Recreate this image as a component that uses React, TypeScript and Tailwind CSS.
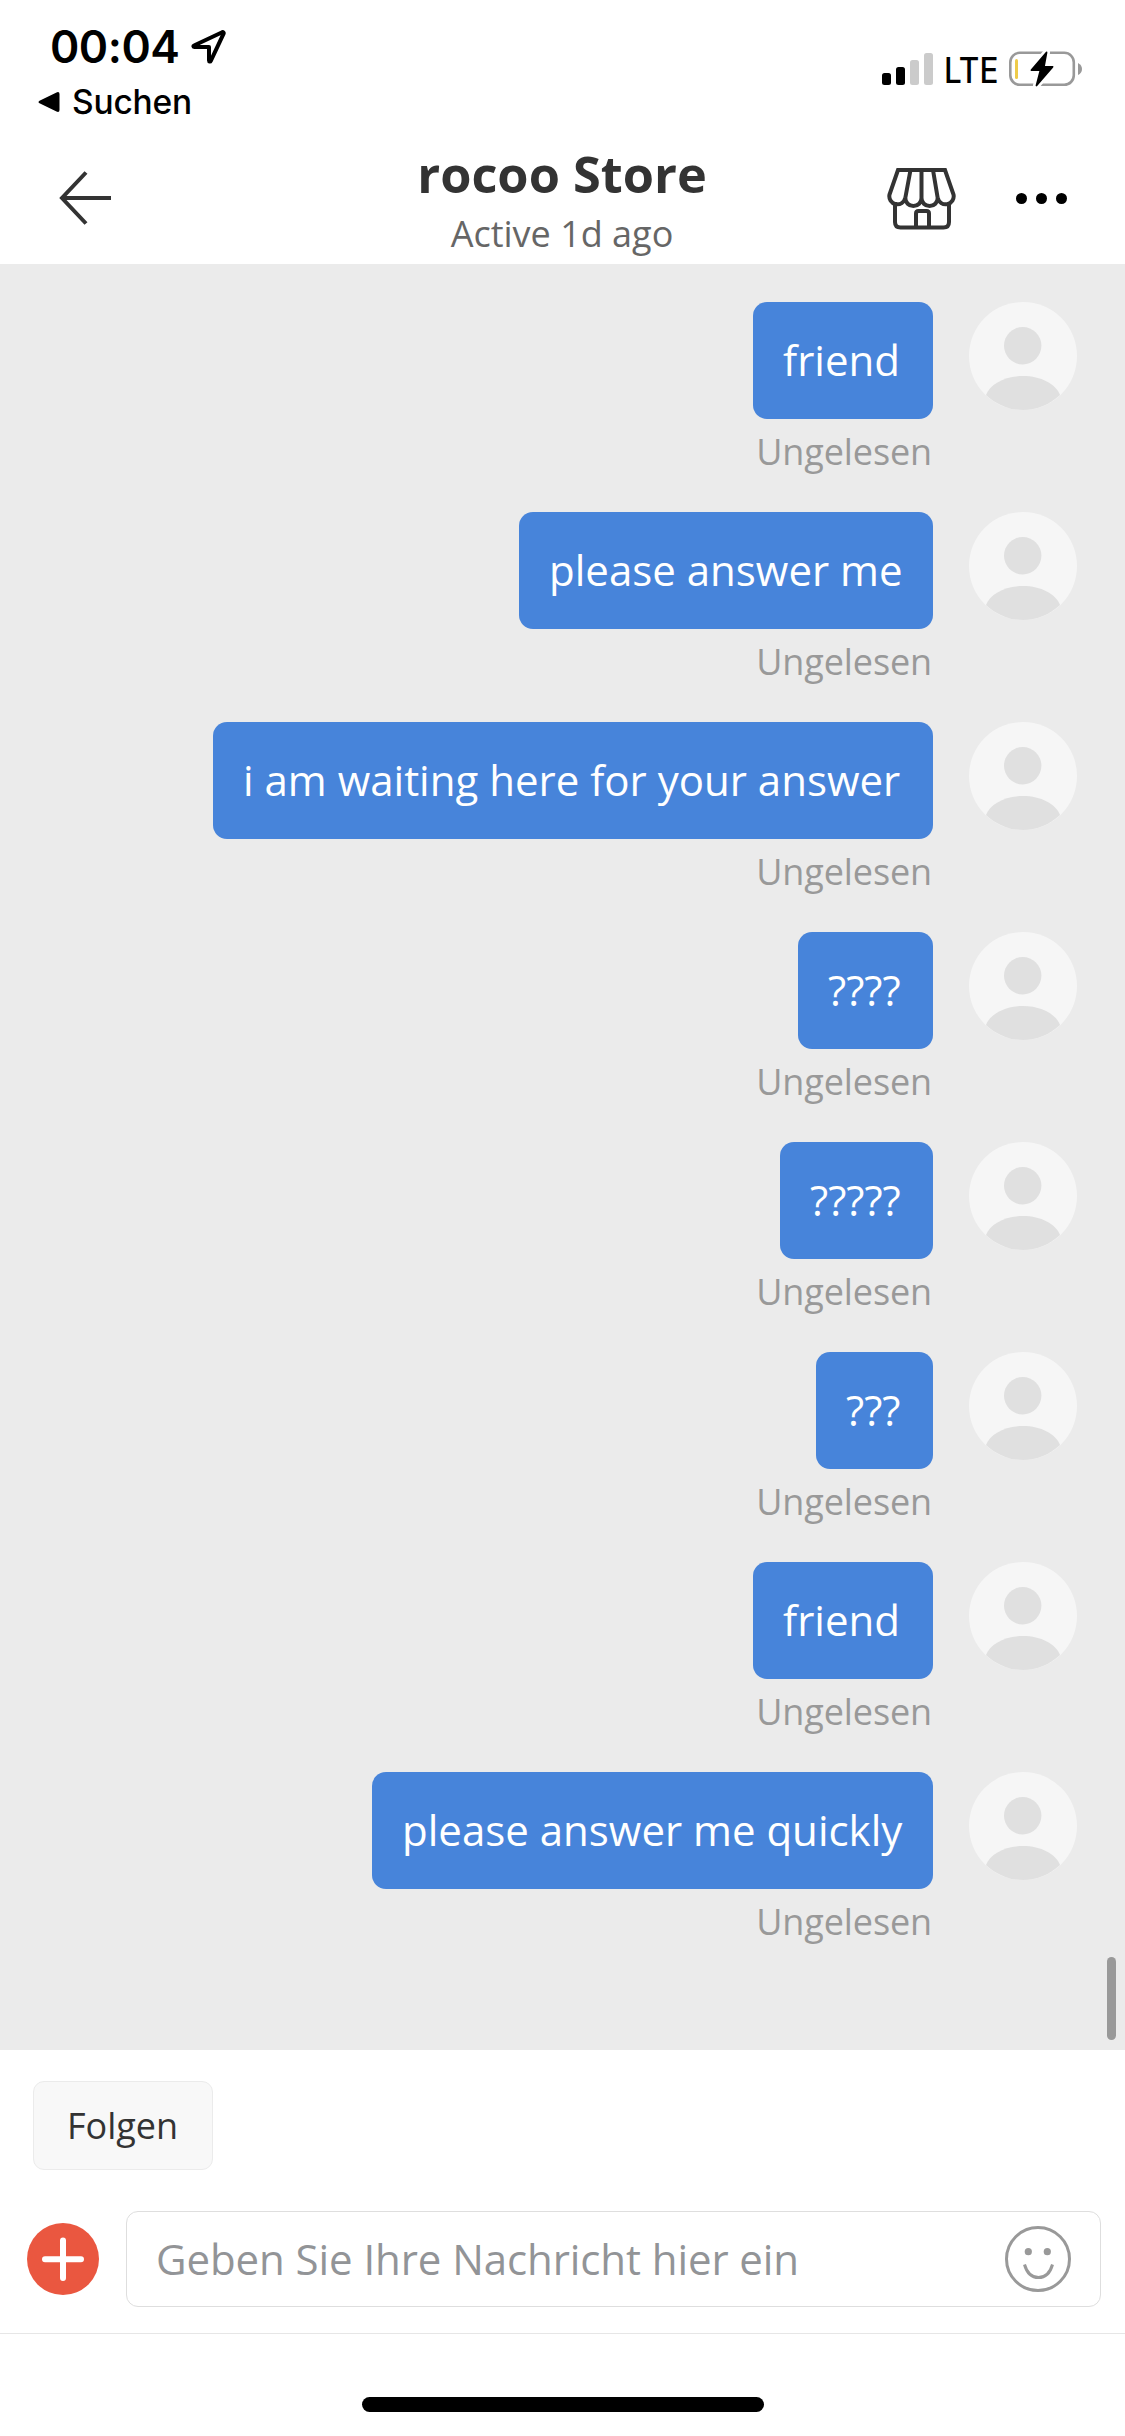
interface Message {
  id: number;
  text: string;
  size: string;
}

const messages: Message[] = [
  { id: 1, text: 'friend', size: 'w-[180px]' },
  { id: 2, text: 'please answer me', size: 'w-[414px]' },
  { id: 3, text: 'i am waiting here for your answer', size: 'w-[720px]' },
  { id: 4, text: '????', size: 'w-[135px]' },
  { id: 5, text: '?????', size: 'w-[153px]' },
  { id: 6, text: '???', size: 'w-[117px]' },
  { id: 7, text: 'friend', size: 'w-[180px]' },
  { id: 8, text: 'please answer me quickly', size: 'w-[561px]' },
];

function StatusBar() {
  return (
    <div className="flex h-[132px] justify-between font-['Inter',sans-serif] text-black">
      <div className="pl-[38px] pt-[20px]">
        <div className="flex items-center pl-[12px]">
          <span className="text-[44.500px] font-semibold leading-[54px] tracking-[-0.500px]">00:04</span>
          <svg className="ml-[12px]" width="36" height="36" viewBox="0 0 36 36" fill="none">
            <path
              d="M3 16.500 31.200 3.200c.9-.4 1.800.5 1.400 1.400L19.800 31.800c-.5 1.100-1.800.9-1.800-.3V18H3.500c-1.200 0-1.400-1.100-.5-1.500Z"
              stroke="black"
              strokeWidth="4"
              strokeLinejoin="round"
            />
          </svg>
        </div>
        <div className="mt-[8px] flex items-center">
          <svg width="22" height="22" viewBox="0 0 22 22">
            <path d="M1.500 9.700 18.500 1.400Q21.500.3 21.500 3v16q0 2.700-3 1.600L1.500 12.300q-2-1.300 0-2.600Z" />
          </svg>
          <span className="ml-[12px] text-[33.500px] font-medium leading-[40px] tracking-[-0.200px]">Suchen</span>
        </div>
      </div>

      <div className="mt-[51px] flex h-[36px] items-center pr-[42px]">
        <svg width="51" height="32" viewBox="0 0 51 32">
          <rect x="0" y="20" width="9" height="12" rx="2.500" />
          <rect x="14" y="14" width="9" height="18" rx="2.500" />
          <rect x="28" y="7" width="9" height="25" rx="2.500" fill="#cbcbcb" />
          <rect x="42" y="0" width="9" height="32" rx="2.500" fill="#cbcbcb" />
        </svg>
        <span className="ml-[11px] mt-[2px] w-[55px] origin-left scale-x-90 whitespace-nowrap text-[35px] font-medium leading-[36px]">
          LTE
        </span>
        <svg className="ml-[10px]" width="74" height="36" viewBox="0 0 74 36">
          <rect x="1.300" y="1.800" width="63.500" height="32" rx="9.500" fill="none" stroke="#999" strokeWidth="2.600" />
          <rect x="6" y="8" width="3" height="20" rx="1.500" fill="#eecb4a" />
          <path d="M69 12q4 2 4 6t-4 6Z" fill="#999" />
          <path
            d="M37.500 1.500 22.500 19.200h9L27.500 34.500 43.500 15.800h-8.600Z"
            stroke="white"
            strokeWidth="7"
            strokeLinejoin="round"
          />
          <path
            d="M37.500 1.500 22.500 19.200h9L27.500 34.500 43.500 15.800h-8.600Z"
            stroke="black"
            strokeWidth="1.800"
            strokeLinejoin="round"
          />
        </svg>
      </div>
    </div>
  );
}

function StoreIcon() {
  return (
    <svg width="69" height="62" viewBox="0 0 69 62" fill="none" stroke="#333" strokeWidth="4">
      <path d="M11 2h47l8.500 24.500a8 8 0 0 1-15.800 3.500 8 8 0 0 1-16.200 0 8 8 0 0 1-16.200 0A8 8 0 0 1 2.500 26.500L11 2Z" />
      <path d="M23.500 2 18.300 30M34.500 2v28M46 2l4.700 28" />
      <path d="M8 34v20q0 5.500 5.500 5.500h43Q62 59.500 62 54V34" />
      <path d="M29 59V45.500q0-2.500 2.500-2.500h8q2.500 0 2.500 2.500V59" />
    </svg>
  );
}

function Header() {
  return (
    <header className="flex h-[132px] items-center pl-[59px] pr-[58px]">
      <svg width="52" height="56" viewBox="0 0 52 56" fill="none" stroke="#333" strokeWidth="4">
        <path d="M52 28H3.500M27 2.500 3 28l24 25.500" />
      </svg>
      <div className="ml-[241px] mt-[6px] w-[420px] text-center">
        <h1 className="text-[50.500px] font-bold leading-[62px] text-[#333]">rocoo Store</h1>
        <p className="mt-[4px] text-[36px] leading-[50px] text-[#666]">Active 1d ago</p>
      </div>
      <div className="ml-auto mt-[1px] flex items-center">
        <StoreIcon />
        <div className="ml-[60px] flex gap-[9px]">
          <span className="size-[11px] rounded-full bg-black" />
          <span className="size-[11px] rounded-full bg-black" />
          <span className="size-[11px] rounded-full bg-black" />
        </div>
      </div>
    </header>
  );
}

function Avatar() {
  return (
    <svg width="108" height="108" viewBox="0 0 108 108">
      <circle cx="54" cy="54" r="54" fill="#f6f6f6" />
      <circle cx="53.700" cy="43.700" r="18.700" fill="#e0e0e0" />
      <path d="M17 93C21 82 36 74 54 74s33 8 37 19C81 102.500 68 108 54 108s-27-5.500-37-15Z" fill="#e0e0e0" />
    </svg>
  );
}

function MessageRow({ message }: { message: Message }) {
  return (
    <div className="flex h-[210px] items-start justify-end gap-[36px]">
      <div className="flex flex-col items-end">
        <div
          className={`flex h-[117px] items-center whitespace-nowrap rounded-[14px] bg-[#4784da] pb-[3px] pl-[30px] text-[42px] leading-[57px] text-white ${message.size}`}
        >
          {message.text}
        </div>
        <span className="mr-[1px] mt-[8px] text-[36px] leading-[50px] tracking-[-0.120px] text-[#999]">
          Ungelesen
        </span>
      </div>
      <Avatar />
    </div>
  );
}

export default function App() {
  return (
    <div className="flex h-[2436px] w-[1125px] flex-col bg-white font-['Open_Sans',sans-serif]">
      <StatusBar />
      <Header />

      <main className="relative h-[1786px] bg-[#ebebeb] pr-[48px] pt-[38px]">
        {messages.map((message) => (
          <MessageRow key={message.id} message={message} />
        ))}
        <div className="absolute bottom-[10px] right-[9px] h-[83px] w-[9px] rounded-full bg-[#999]" />
      </main>

      <div className="px-[33px] pt-[31px]">
        <button className="h-[89px] w-[180px] rounded-[11px] border border-[#ebebeb] bg-[#f8f8f8] pr-[1px] text-[36px] leading-[50px] text-[#333]">
          Folgen
        </button>
      </div>

      <div className="mt-[41px] flex items-center border-b border-[#e6e6e6] pb-[26px] pl-[27px] pr-[24px]">
        <svg width="72" height="72" viewBox="0 0 72 72">
          <circle cx="36" cy="36" r="36" fill="#ea5740" />
          <path d="M18 36.200h36M36 17.500v37.500" stroke="white" strokeWidth="6" strokeLinecap="round" />
        </svg>
        <div className="ml-[27px] flex h-[96px] flex-1 items-center justify-between rounded-[12px] border border-[#dedede] pl-[29px] pr-[29px]">
          <span className="mb-[2px] text-[42px] leading-[57px] tracking-[-0.080px] text-[#929497]">
            Geben Sie Ihre Nachricht hier ein
          </span>
          <svg width="66" height="66" viewBox="0 0 66 66" fill="none" stroke="#999" strokeWidth="3">
            <circle cx="33" cy="33" r="31.500" />
            <circle cx="23.300" cy="25.700" r="3.600" fill="#999" stroke="none" />
            <circle cx="42.300" cy="25.700" r="3.600" fill="#999" stroke="none" />
            <path d="M19.500 38.500c2.500 9 8 13 14 13s11.500-4 14-13" />
          </svg>
        </div>
      </div>

      <div className="mx-auto mt-[63px] h-[15px] w-[402px] rounded-full bg-black" />
    </div>
  );
}
